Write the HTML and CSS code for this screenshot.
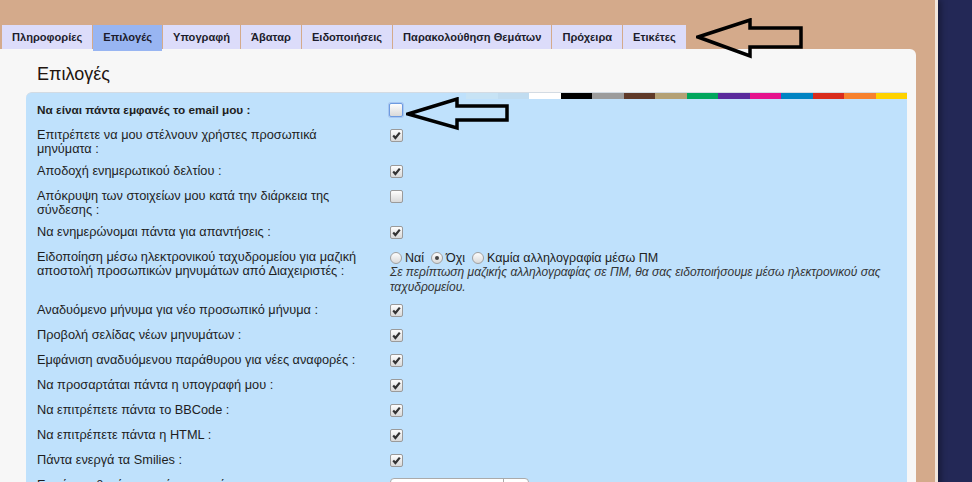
FILE: index.html
```html
<!DOCTYPE html>
<html lang="el">
<head>
  <meta charset="UTF-8">
  <title>Πίνακας ελέγχου χρήστη - Επιλογές</title>
  <link rel="stylesheet" href="styles.css">
</head>
<body>
  <div class="site">
    <nav class="tabs">
      <a class="tab">Πληροφορίες</a>
      <a class="tab active">Επιλογές</a>
      <a class="tab">Υπογραφή</a>
      <a class="tab">Άβαταρ</a>
      <a class="tab">Ειδοποιήσεις</a>
      <a class="tab">Παρακολούθηση Θεμάτων</a>
      <a class="tab">Πρόχειρα</a>
      <a class="tab">Ετικέτες</a>
    </nav>

    <main class="panel">
      <h2 class="panel-title">Επιλογές</h2>

      <div class="options">
        <div class="swatches">
          <span class="sw sw-sky"></span>
          <span class="sw sw-ice"></span>
          <span class="sw sw-white"></span>
          <span class="sw sw-black"></span>
          <span class="sw sw-grey"></span>
          <span class="sw sw-brown"></span>
          <span class="sw sw-sand"></span>
          <span class="sw sw-green"></span>
          <span class="sw sw-purple"></span>
          <span class="sw sw-pink"></span>
          <span class="sw sw-blue"></span>
          <span class="sw sw-red"></span>
          <span class="sw sw-orange"></span>
          <span class="sw sw-yellow"></span>
        </div>

        <div class="opt">
          <div class="opt-label strong">Να είναι πάντα εμφανές το email μου :</div>
          <div class="opt-field"><span class="check focus"></span></div>
        </div>
        <div class="opt">
          <div class="opt-label">Επιτρέπετε να μου στέλνουν χρήστες προσωπικά μηνύματα :</div>
          <div class="opt-field"><span class="check on"><svg viewBox="0 0 11 11" width="11" height="11"><path d="M2.2 5.6 L4.4 8 L8.8 2.6"/></svg></span></div>
        </div>
        <div class="opt">
          <div class="opt-label">Αποδοχή ενημερωτικού δελτίου :</div>
          <div class="opt-field"><span class="check on"><svg viewBox="0 0 11 11" width="11" height="11"><path d="M2.2 5.6 L4.4 8 L8.8 2.6"/></svg></span></div>
        </div>
        <div class="opt">
          <div class="opt-label">Απόκρυψη των στοιχείων μου κατά την διάρκεια της σύνδεσης :</div>
          <div class="opt-field"><span class="check"></span></div>
        </div>
        <div class="opt">
          <div class="opt-label">Να ενημερώνομαι πάντα για απαντήσεις :</div>
          <div class="opt-field"><span class="check on"><svg viewBox="0 0 11 11" width="11" height="11"><path d="M2.2 5.6 L4.4 8 L8.8 2.6"/></svg></span></div>
        </div>
        <div class="opt">
          <div class="opt-label">Ειδοποίηση μέσω ηλεκτρονικού ταχυδρομείου για μαζική αποστολή προσωπικών μηνυμάτων από Διαχειριστές :</div>
          <div class="opt-field">
            <div class="radios">
              <label><span class="radio"></span>Ναί</label>
              <label><span class="radio on"></span>Όχι</label>
              <label><span class="radio"></span>Καμία αλληλογραφία μέσω ΠΜ</label>
            </div>
            <p class="explain">Σε περίπτωση μαζικής αλληλογραφίας σε ΠΜ, θα σας ειδοποιήσουμε μέσω ηλεκτρονικού σας ταχυδρομείου.</p>
          </div>
        </div>
        <div class="opt">
          <div class="opt-label">Αναδυόμενο μήνυμα για νέο προσωπικό μήνυμα :</div>
          <div class="opt-field"><span class="check on"><svg viewBox="0 0 11 11" width="11" height="11"><path d="M2.2 5.6 L4.4 8 L8.8 2.6"/></svg></span></div>
        </div>
        <div class="opt">
          <div class="opt-label">Προβολή σελίδας νέων μηνυμάτων :</div>
          <div class="opt-field"><span class="check on"><svg viewBox="0 0 11 11" width="11" height="11"><path d="M2.2 5.6 L4.4 8 L8.8 2.6"/></svg></span></div>
        </div>
        <div class="opt">
          <div class="opt-label">Εμφάνιση αναδυόμενου παράθυρου για νέες αναφορές :</div>
          <div class="opt-field"><span class="check on"><svg viewBox="0 0 11 11" width="11" height="11"><path d="M2.2 5.6 L4.4 8 L8.8 2.6"/></svg></span></div>
        </div>
        <div class="opt">
          <div class="opt-label">Να προσαρτάται πάντα η υπογραφή μου :</div>
          <div class="opt-field"><span class="check on"><svg viewBox="0 0 11 11" width="11" height="11"><path d="M2.2 5.6 L4.4 8 L8.8 2.6"/></svg></span></div>
        </div>
        <div class="opt">
          <div class="opt-label">Να επιτρέπετε πάντα το BBCode :</div>
          <div class="opt-field"><span class="check on"><svg viewBox="0 0 11 11" width="11" height="11"><path d="M2.2 5.6 L4.4 8 L8.8 2.6"/></svg></span></div>
        </div>
        <div class="opt">
          <div class="opt-label">Να επιτρέπετε πάντα η HTML :</div>
          <div class="opt-field"><span class="check on"><svg viewBox="0 0 11 11" width="11" height="11"><path d="M2.2 5.6 L4.4 8 L8.8 2.6"/></svg></span></div>
        </div>
        <div class="opt">
          <div class="opt-label">Πάντα ενεργά τα Smilies :</div>
          <div class="opt-field"><span class="check on"><svg viewBox="0 0 11 11" width="11" height="11"><path d="M2.2 5.6 L4.4 8 L8.8 2.6"/></svg></span></div>
        </div>
        <div class="opt">
          <div class="opt-label">Εμφάνιση θεμάτων από προηγούμενες :</div>
          <div class="opt-field"><span class="select"><span class="select-value">Όλα τα θέματα</span><span class="select-btn"></span></span></div>
        </div>
      </div>
    </main>

    <!-- annotation arrows drawn over the screenshot -->
    <svg class="arrow arrow-tabs" width="108" height="41" viewBox="0 0 108 41">
      <polygon points="2,19 54,2 54,10 105,10 105,29 54,29 54,38"/>
    </svg>
    <svg class="arrow arrow-email" width="104" height="34" viewBox="0 0 104 34">
      <polygon points="2,17 51,2 51,9 101,9 101,23 51,23 51,31"/>
    </svg>
  </div>
</body>
</html>
```

FILE: styles.css
```css
html, body {
  margin: 0;
  height: 100%;
  overflow: hidden;
}
body {
  background: #232856;
  font-family: "Liberation Sans", Arial, sans-serif;
  color: #222;
}
.site {
  position: relative;
  width: 935px;
  min-height: 100%;
  background: #d4aa8b;
  border-right: 3px solid #f1e5db;
  box-shadow: 3px 0 6px rgba(0,0,0,0.35);
}

/* tabs */
.tabs {
  display: flex;
  gap: 1px;
  height: 24px;
  padding: 25px 0 0 2px;
}
.tab {
  height: 24px;
  line-height: 24px;
  padding: 0 10px;
  background: #dcdcfa;
  color: #1c1c2c;
  font-size: 11.1px;
  font-weight: bold;
  cursor: pointer;
}
.tab.active {
  position: relative;
  z-index: 1;
  height: 26px;
  background: #98b5f2;
}

/* panel */
.panel {
  margin-right: 19px;
  padding: 1px 9px 0 26px;
  background: #f7f7f7;
  border-top-right-radius: 6px;
  min-height: 500px;
}
.panel-title {
  margin: 14px 0 7px 11px;
  font-size: 18px;
  font-weight: normal;
  line-height: 21px;
  color: #22150f;
}
.options {
  padding-left: 11px;
  background: #bfe1fc;
  border-top: 1px solid #d3dbe3;
  border-top-left-radius: 6px;
}
.swatches {
  display: flex;
  justify-content: flex-end;
  height: 6px;
}
.sw {
  width: 31.5px;
}
.sw-sky { background: #c7e3f5; }
.sw-ice { background: #c0dcf0; }
.sw-white { background: #ffffff; }
.sw-black { background: #000000; }
.sw-grey { background: #9c9c9c; }
.sw-brown { background: #5f3a29; }
.sw-sand { background: #b4a175; }
.sw-green { background: #00a65d; }
.sw-purple { background: #5a2a9c; }
.sw-pink { background: #e5128c; }
.sw-blue { background: #0084c3; }
.sw-red { background: #d92c1d; }
.sw-orange { background: #f6812e; }
.sw-yellow { background: #fed200; }

/* option rows */
.opt {
  display: grid;
  grid-template-columns: 330px 1fr;
  column-gap: 23px;
  padding: 4px 0;
}
.opt-label {
  font-size: 12.75px;
  line-height: 14px;
  color: #1e1e1e;
}
.opt-label.strong {
  font-weight: bold;
  font-size: 11.8px;
}
.opt-field {
  min-height: 17px;
  font-size: 12px;
  color: #222;
}
.check {
  display: block;
  width: 11px;
  height: 11px;
  margin-top: 1px;
  border: 1px solid #9a9a9a;
  border-radius: 2px;
  background: linear-gradient(#fdfdfd, #d9d9d9);
}
.check svg {
  display: block;
}
.check path {
  fill: none;
  stroke: #333;
  stroke-width: 2.2;
}
.check.focus {
  width: 12px;
  height: 12px;
  margin: 0 0 0 -1px;
  border-color: #6d9be0;
  box-shadow: 0 0 0 1px #a8c6f1;
}

.radios {
  display: flex;
  align-items: center;
  gap: 7px;
  height: 14px;
  margin-top: 1px;
  font-size: 12.5px;
}
.radios label {
  display: flex;
  align-items: center;
  gap: 3px;
}
.radio {
  position: relative;
  width: 10px;
  height: 10px;
  border: 1px solid #a0a0a0;
  border-radius: 50%;
  background: linear-gradient(#fdfdfd, #d9d9d9);
}
.radio.on::after {
  content: "";
  position: absolute;
  left: 3px;
  top: 3px;
  width: 4px;
  height: 4px;
  border-radius: 50%;
  background: #444;
}
.explain {
  margin: 0;
  font-style: italic;
  line-height: 15px;
  color: #333;
}

.select {
  display: flex;
  width: 137px;
  height: 20px;
  border: 1px solid #aaa;
  border-radius: 4px;
  background: #fff;
  font-size: 12px;
}
.select-value {
  flex: 1;
  padding: 2px 4px;
}
.select-btn {
  width: 24px;
  border-left: 1px solid #aaa;
}

/* arrows */
.arrow {
  position: absolute;
}
.arrow polygon {
  fill: none;
  stroke: #000;
  stroke-width: 3.5;
}
.arrow-tabs {
  left: 696px;
  top: 18px;
}
.arrow-email {
  left: 406px;
  top: 97px;
}
```
